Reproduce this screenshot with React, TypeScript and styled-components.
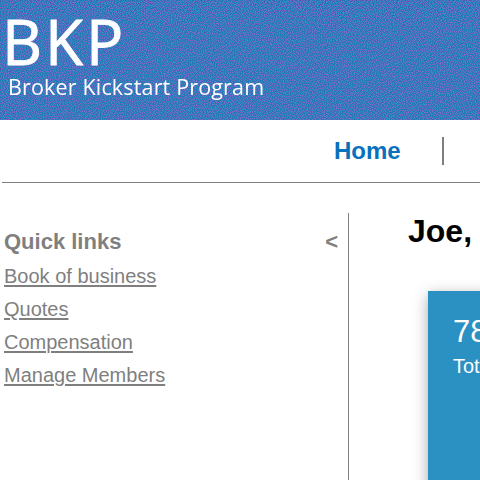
import React, { useEffect, useRef } from "react";
import styled, { createGlobalStyle } from "styled-components";

const GlobalStyle = createGlobalStyle`
  * { box-sizing: border-box; }
  html, body { margin: 0; background: #fff; overflow: hidden; }
  body { font-family: "Liberation Sans", Arial, sans-serif; }
`;

const Page = styled.div`
  width: 480px;
  height: 480px;
  overflow: hidden;
  display: flex;
  flex-direction: column;
`;

const Banner = styled.header`
  position: relative;
  flex: none;
  height: 120px;
  background: #3f78ba;
  color: #fff;
  font-family: "Open Sans", sans-serif;
  white-space: nowrap;
`;

const Texture = styled.canvas`
  position: absolute;
  inset: 0;
`;

const BrandText = styled.div`
  position: relative;
`;

const Brand = styled.h1`
  margin: 0;
  padding: 6px 0 0 2px;
  height: 72px;
  font-size: 62px;
  line-height: 70px;
  font-weight: 400;
  letter-spacing: 3px;
  -webkit-text-stroke: 0.9px #fff;
`;

const Tagline = styled.div`
  padding-left: 8px;
  font-size: 21.5px;
  line-height: 30px;
  letter-spacing: 0.16px;
`;

const Nav = styled.nav`
  flex: none;
  display: flex;
  align-items: center;
  height: 63px;
  margin-left: 2px;
  padding-left: 332px;
  border-bottom: 1px solid #7f7f7f;
`;

const NavItem = styled.a`
  color: #0870bd;
  font-size: 24px;
  font-weight: 700;
  line-height: 28px;
  width: 108px;
`;

const NavDivider = styled.span`
  width: 2px;
  height: 28px;
  background: #7f7f7f;
`;

const Content = styled.div`
  flex: 1;
  display: flex;
  padding-top: 30px;
`;

const Sidebar = styled.aside`
  flex: none;
  width: 349px;
  padding: 15px 10px 0 4px;
  border-right: 1px solid #7f7f7f;
  color: #7f7f7f;
`;

const SidebarHeader = styled.div`
  display: flex;
  justify-content: space-between;
  height: 31px;
  font-size: 22px;
  font-weight: 700;
  line-height: 28px;
`;

const LinkList = styled.ul`
  list-style: none;
  margin: 0;
  padding: 0;
`;

const LinkRow = styled.li`
  height: 33px;
  font-size: 20px;
  line-height: 34px;
`;

const QuickLink = styled.a`
  text-decoration: underline;
  text-decoration-thickness: 2px;
  text-underline-offset: 2px;
  text-decoration-skip-ink: auto;
`;

const Main = styled.main`
  flex: none;
  width: 400px;
  padding-left: 59px;
`;

const Greeting = styled.h2`
  margin: 0;
  height: 78px;
  font-size: 32px;
  line-height: 36px;
  font-weight: 700;
`;

const StatCard = styled.section`
  margin-left: 20px;
  width: 300px;
  height: 260px;
  padding: 23px 25px;
  background: #2b90c2;
  color: #fff;
  box-shadow: 0 4px 14px rgba(0, 0, 0, 0.34);
`;

const StatValue = styled.div`
  font-size: 31px;
  line-height: 36px;
`;

const StatLabel = styled.div`
  font-size: 20px;
  line-height: 32px;
`;

const links = ["Book of business", "Quotes", "Compensation", "Manage Members"];

const tint = [66, 119, 188];
const palette = [
  [34, 152, 206],
  [84, 80, 170],
  [118, 110, 206],
  [40, 122, 180],
];

/* Fills the canvas with an error-diffused mix of the palette that averages to the tint. */
function paintTexture(canvas: HTMLCanvasElement) {
  const ctx = canvas.getContext("2d");
  if (!ctx) return;
  const { width, height } = canvas;
  const image = ctx.createImageData(width, height);
  const error = new Float32Array((width + 2) * (height + 1) * 3);
  const at = (x: number, y: number) => (y * (width + 2) + x + 1) * 3;
  let seed = 7;
  const jitter = () => {
    seed = (seed * 16807) % 2147483647;
    return (seed / 2147483647 - 0.5) * 36;
  };
  for (let y = 0; y < height; y++) {
    for (let x = 0; x < width; x++) {
      const wanted = tint.map((v, c) => v + error[at(x, y) + c]);
      const noise = jitter();
      let best = palette[0];
      let bestDistance = Infinity;
      for (const color of palette) {
        const d =
          (color[0] - wanted[0] - noise) ** 2 +
          (color[1] - wanted[1] + noise) ** 2 +
          (color[2] - wanted[2]) ** 2;
        if (d < bestDistance) {
          bestDistance = d;
          best = color;
        }
      }
      for (let c = 0; c < 3; c++) {
        const e = wanted[c] - best[c];
        error[at(x + 1, y) + c] += (e * 7) / 16;
        error[at(x - 1, y + 1) + c] += (e * 3) / 16;
        error[at(x, y + 1) + c] += (e * 5) / 16;
        error[at(x + 1, y + 1) + c] += e / 16;
        image.data[(y * width + x) * 4 + c] = best[c];
      }
      image.data[(y * width + x) * 4 + 3] = 255;
    }
  }
  ctx.putImageData(image, 0, 0);
}

function BannerTexture() {
  const ref = useRef<HTMLCanvasElement>(null);
  useEffect(() => {
    if (ref.current) paintTexture(ref.current);
  }, []);
  return <Texture ref={ref} width={480} height={120} aria-hidden />;
}

export default function App() {
  return (
    <Page>
      <GlobalStyle />
      <Banner>
        <BannerTexture />
        <BrandText>
          <Brand>BKP</Brand>
          <Tagline>Broker Kickstart Program</Tagline>
        </BrandText>
      </Banner>
      <Nav>
        <NavItem>Home</NavItem>
        <NavDivider />
      </Nav>
      <Content>
        <Sidebar>
          <SidebarHeader>
            <span>Quick links</span>
            <span>&lt;</span>
          </SidebarHeader>
          <LinkList>
            {links.map((label) => (
              <LinkRow key={label}>
                <QuickLink>{label}</QuickLink>
              </LinkRow>
            ))}
          </LinkList>
        </Sidebar>
        <Main>
          <Greeting>Joe,</Greeting>
          <StatCard>
            <StatValue>78</StatValue>
            <StatLabel>Total</StatLabel>
          </StatCard>
        </Main>
      </Content>
    </Page>
  );
}
